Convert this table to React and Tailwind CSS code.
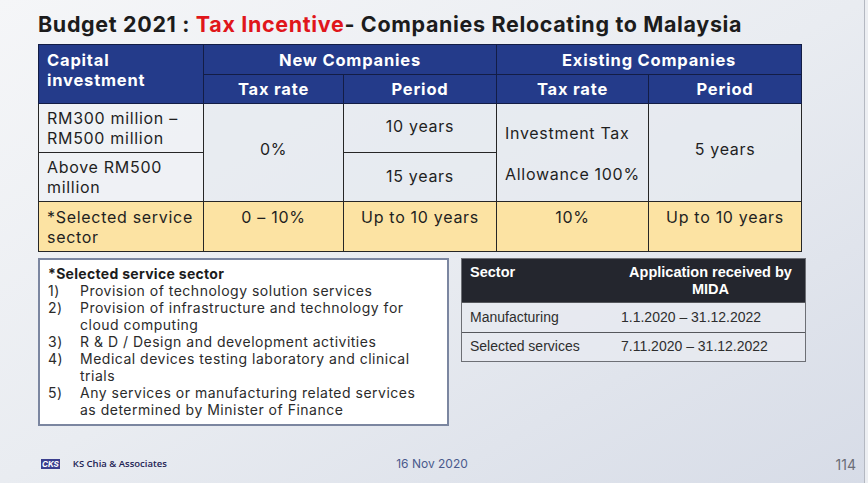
const head = "border border-[#131d45] font-bold text-white tracking-[0.8px]";
const cell = "border border-[#262626] px-2";

const services = [
  ["1)", "Provision of technology solution services"],
  ["2)", "Provision of infrastructure and technology for cloud computing"],
  ["3)", "R & D / Design and development activities"],
  ["4)", "Medical devices testing laboratory and clinical trials"],
  ["5)", "Any services or manufacturing related services as determined by Minister of Finance"],
];

const periods = [
  ["Manufacturing", "1.1.2020 – 31.12.2022"],
  ["Selected services", "7.11.2020 – 31.12.2022"],
];

const App = () => {
  return (
    <div className="w-[868px] h-[483px] overflow-hidden bg-[#eceef2]">
      <div className="w-[865px] h-full flex flex-col border-r border-[#b4b8c1] bg-gradient-to-br from-[#f5f6f8] via-[#e9ecf1] to-[#d7dce7] px-[38px] font-['Inter',sans-serif] text-[#1f1f1f]">
        <h1 className="pt-[11px] h-[44px] text-[21.5px] font-bold leading-[26px] tracking-[0.65px] text-[#1c1c1c]">
          Budget 2021 : <span className="text-[#e0161b]">Tax Incentive</span>- Companies Relocating to Malaysia
        </h1>

        <table className="w-[763px] table-fixed border-collapse text-[16px] leading-5 tracking-[0.7px]">
          <colgroup>
            <col className="w-[165px]" />
            <col className="w-[140px]" />
            <col className="w-[153px]" />
            <col className="w-[152px]" />
            <col className="w-[153px]" />
          </colgroup>
          <thead className="bg-[#243b8a] text-[16.5px]">
            <tr className="h-[30px]">
              <th rowSpan={2} className={`${head} px-2 pt-[5px] align-top text-left`}>
                Capital
                <br />
                investment
              </th>
              <th colSpan={2} className={head}>New Companies</th>
              <th colSpan={2} className={head}>Existing Companies</th>
            </tr>
            <tr className="h-[29px]">
              <th className={head}>Tax rate</th>
              <th className={head}>Period</th>
              <th className={head}>Tax rate</th>
              <th className={head}>Period</th>
            </tr>
          </thead>
          <tbody>
            <tr className="h-[49px]">
              <td className={`${cell} bg-[#eff1f5]/80`}>
                RM300 million –
                <br />
                RM500 million
              </td>
              <td rowSpan={2} className={`${cell} bg-[#e6e9ef]/70 pb-[8px] text-center`}>0%</td>
              <td className={`${cell} bg-[#e6e9ef]/70 pb-[4px] text-center`}>10 years</td>
              <td rowSpan={2} className={`${cell} bg-[#e6e9ef]/70`}>
                <div className="flex flex-col gap-[21px] pt-[2px]">
                  <span>Investment Tax</span>
                  <span>Allowance 100%</span>
                </div>
              </td>
              <td rowSpan={2} className={`${cell} bg-[#e6e9ef]/70 pb-[8px] text-center`}>5 years</td>
            </tr>
            <tr className="h-[49px]">
              <td className={`${cell} bg-[#eff1f5]/80`}>
                Above RM500
                <br />
                million
              </td>
              <td className={`${cell} bg-[#e6e9ef]/70 pb-[3px] text-center`}>15 years</td>
            </tr>
            <tr className="h-[50px] bg-[#fce3a3] align-top">
              <td className={`${cell} pt-[5px]`}>
                *Selected service
                <br />
                sector
              </td>
              <td className={`${cell} pt-[5px] text-center`}>0 – 10%</td>
              <td className={`${cell} pt-[5px] text-center`}>Up to 10 years</td>
              <td className={`${cell} pt-[5px] text-center`}>10%</td>
              <td className={`${cell} pt-[5px] text-center`}>Up to 10 years</td>
            </tr>
          </tbody>
        </table>

        <div className="mt-[6px] flex items-start gap-[12px]">
          <div className="w-[411px] h-[168px] border-2 border-[#7b86a0] bg-white pl-[8px] pr-[14px] pt-[5px] text-[14px] leading-[17px] tracking-[0.5px] text-[#2b2b2b]">
            <p className="font-bold tracking-[0.3px] text-[#1c1c1c]">*Selected service sector</p>
            {services.map(([n, text]) => (
              <div key={n} className="flex">
                <span className="w-[32px] shrink-0">{n}</span>
                <span>{text}</span>
              </div>
            ))}
          </div>

          <div className="w-[345px] border border-[#6d6f75] font-['Liberation_Sans',Arial,sans-serif] text-[14px]">
            <div className="flex h-[43px] bg-[#24262e] pt-[5px] text-[14.5px] font-bold leading-[17px] text-white">
              <div className="w-[150px] pl-[8px]">Sector</div>
              <div className="flex-1 pl-[4px] text-center">
                Application received by
                <br />
                MIDA
              </div>
            </div>
            {periods.map(([sector, range]) => (
              <div key={sector} className="flex h-[29.5px] items-center border-t border-[#55575c] bg-[#e7eaf0]/80 text-[#2e2e2e]">
                <div className="w-[150px] pl-[8px]">{sector}</div>
                <div className="flex-1 pl-[9px]">{range}</div>
              </div>
            ))}
          </div>
        </div>

        <div className="mt-auto mb-[8px] grid h-[22px] grid-cols-3 items-center">
          <div className="flex items-center gap-[13px] pl-[3px]">
            <span className="bg-[#3b3f8e] px-[1px] text-[8px] font-bold italic leading-[10px] text-white">CKS</span>
            <span className="font-['Open_Sans',sans-serif] text-[9.5px] font-semibold text-[#1d2354]">KS Chia &amp; Associates</span>
          </div>
          <div className="text-center text-[12px] text-[#4a5a8c]">16 Nov 2020</div>
          <div className="text-right text-[14px] text-[#6b6e76] -mr-[30px]">114</div>
        </div>
      </div>
    </div>
  );
};

export default App;
